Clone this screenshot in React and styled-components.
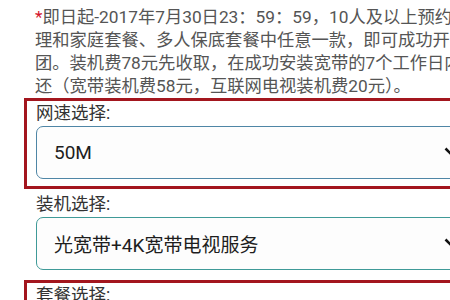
import React from "react";
import styled, { createGlobalStyle } from "styled-components";

const GlobalStyle = createGlobalStyle`
  body {
    margin: 0;
    background: #ffffff;
    overflow: hidden;
    font-family: Roboto, "Noto Sans CJK SC", "Noto Sans", sans-serif;
  }
`;

const notice = [
  "即日起-2017年7月30日23：59：59，10人及以上预约",
  "理和家庭套餐、多人保底套餐中任意一款，即可成功开",
  "团。装机费78元先收取，在成功安装宽带的7个工作日内",
  "还（宽带装机费58元，互联网电视装机费20元）。",
];

const fields = [
  { label: "网速选择:", value: "50M", highlight: true, tone: "#4f86a6" },
  { label: "装机选择:", value: "光宽带+4K宽带电视服务", highlight: false, tone: "#3f9a98" },
  { label: "套餐选择:", value: "", highlight: true, tone: "#4f86a6" },
];

function App() {
  return (
    <Page>
      <GlobalStyle />
      <Notice>
        {notice.map((line, i) => (
          <NoticeLine key={i}>
            {i === 0 && <Star>*</Star>}
            {line}
          </NoticeLine>
        ))}
      </Notice>
      {fields.map((f) => (
        <Field key={f.label} $highlight={f.highlight}>
          <Label>{f.label}</Label>
          {f.value && (
            <Select $tone={f.tone}>
              <span>{f.value}</span>
              <Chevron viewBox="0 0 20 12">
                <path d="M1.5 1.5 L10 10 L18.5 1.5" />
              </Chevron>
            </Select>
          )}
        </Field>
      ))}
    </Page>
  );
}

const Page = styled.div`
  width: 480px;
  padding-top: 6px;
`;

const Notice = styled.div`
  padding-left: 35px;
  font-size: 17.3px;
  line-height: 23px;
  color: #555555;
`;

const NoticeLine = styled.div`
  white-space: nowrap;
`;

const Star = styled.span`
  color: #d4142c;
`;

const Field = styled.div`
  margin-left: 24px;
  border: 3px solid ${(p) => (p.$highlight ? "#a3161e" : "transparent")};
  padding: 0 9px 7px 9px;
`;

const Label = styled.div`
  font-size: 17.5px;
  line-height: 25px;
  color: #333333;
`;

const Select = styled.div`
  display: flex;
  align-items: center;
  justify-content: space-between;
  box-sizing: border-box;
  height: 53px;
  padding: 0 3px 0 17px;
  border: 1.5px solid ${(p) => p.$tone};
  border-radius: 7px;
  background: #fdfdfd;
  font-size: 19px;
  color: #1e1e1e;
`;

const Chevron = styled.svg`
  width: 20px;
  height: 12px;
  fill: none;
  stroke: #111111;
  stroke-width: 2.6;
`;

export default App;
